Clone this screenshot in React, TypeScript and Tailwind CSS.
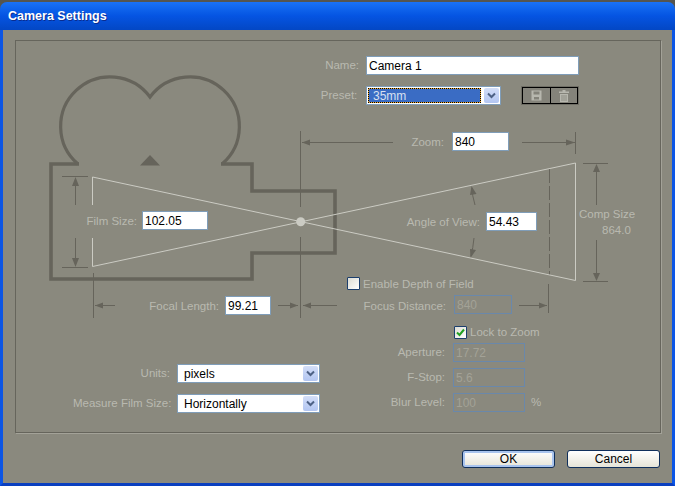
import type { ReactNode } from "react"

const font = { fontFamily: '"Liberation Sans", Arial, sans-serif' }

function Chevron() {
    return (
        <span className="flex h-[15px] w-[15px] shrink-0 items-center justify-center rounded-[2px] bg-gradient-to-b from-[#d3def8] to-[#b3c6f2]">
            <svg width="9" height="7" viewBox="0 0 9 7">
                <path d="M1 1.5 L4.5 5 L8 1.5" fill="none" stroke="#4d6185" strokeWidth="2" />
            </svg>
        </span>
    )
}

function Select({ value }: { value: string }) {
    return (
        <div className="flex h-[19px] w-[143px] items-center justify-between border border-[#7f9db9] bg-white pl-[6px] pr-[1px] text-[12px] leading-none text-black">
            <span>{value}</span>
            <Chevron />
        </div>
    )
}

function Label({ children, className = "" }: { children: ReactNode; className?: string }) {
    return <div className={"absolute whitespace-nowrap text-[11.5px] leading-[14px] text-[#b9b9b0] " + className}>{children}</div>
}

function ValueBox({ value, className }: { value: string; className: string }) {
    return (
        <div className={"absolute flex items-center border border-[#7f9db9] bg-white pl-[2px] text-[12px] leading-none text-black " + className}>
            {value}
        </div>
    )
}

function DisabledBox({ value, className = "" }: { value: string; className?: string }) {
    return (
        <div className={"flex h-[19px] items-center border border-[#6a88ab] pl-[2px] text-[12px] leading-none text-[#a3a297] " + className}>
            {value}
        </div>
    )
}

function CameraDiagram() {
    const dark = "#66645b"
    const light = "#cbcbc3"
    return (
        <svg className="absolute left-0 top-0" width="644" height="391" viewBox="16 41 644 391">
            {/* camera body and reels */}
            <g fill="none" stroke={dark}>
                <path strokeWidth="3.6" d="M79 164 L51 164 L51 279 L252 279 L252 253 L335 253 L335 191 L252 191 L252 164 L221 164" />
                <path strokeWidth="3.2" d="M78 164 A49.5 49.5 0 1 1 150 97 A49.5 49.5 0 1 1 222 164" />
            </g>
            <path d="M150 155 L160 165.5 L140 165.5 Z" fill={dark} />

            {/* dimension lines */}
            <g fill="none" stroke={dark} strokeWidth="1">
                <path d="M62 176.5 H88 M62 267.5 H88 M75.5 180 V205 M75.5 238 V263" />
                <path d="M300.5 131 V207 M300.5 237 V318 M93.5 273 V318 M548.5 284 V313" />
                <path d="M95 305.5 H115 M278 305.5 H298 M303 305.5 H337 M519 305.5 H547" />
                <path d="M302 142.5 H393 M522 142.5 H575 M575.5 132 V154" />
                <path d="M583 163.5 H608 M583 281.5 H608 M596.5 167 V205 M596.5 240 V278" />
                <path d="M475 205 Q472 195 472 188 M474 238 Q473 248 471 256" />
                <path d="M549.5 169 V275" strokeDasharray="14 3" />
            </g>
            <g fill={dark}>
                <path d="M75.5 177 L79 186 L72 186 Z M75.5 267 L79 258 L72 258 Z" />
                <path d="M596.5 164 L600 172 L593 172 Z M596.5 281 L600 273 L593 273 Z" />
                <path d="M95 305.5 L103 302.5 L103 308.5 Z M298 305.5 L290 302.5 L290 308.5 Z M303 305.5 L311 302.5 L311 308.5 Z M547 305.5 L539 302.5 L539 308.5 Z" />
                <path d="M302 142.5 L310 139.5 L310 145.5 Z M575 142.5 L566 139.5 L566 145.5 Z" />
                <path d="M471.5 186 L476.5 194 L470 195 Z M470.5 258 L476 250 L470 249 Z" />
            </g>

            {/* field of view */}
            <path d="M92.5 205 V177 L575.5 280.5 V163 L92.5 266.5 V238" fill="none" stroke={light} strokeWidth="1" />
            <circle cx="300.7" cy="221.7" r="4.5" fill={light} />
        </svg>
    )
}

function IconGroup() {
    return (
        <div className="flex h-[19px] w-[58px] border border-[#6f6e65] bg-[#84837a]">
            <div className="flex flex-1 border border-black">
                <div className="flex flex-1 items-center justify-center border-r border-black">
                    <svg width="11" height="11" viewBox="0 0 11 11">
                        <path d="M0.5 0.5 H10.5 V10.5 H0.5 Z" fill="#b7b7ae" />
                        <path d="M2.5 1.5 H8.5 V4.5 H2.5 Z M3 7 H8 V9.5 H3 Z" fill="#84837a" />
                    </svg>
                </div>
                <div className="flex flex-1 items-center justify-center">
                    <svg width="10" height="12" viewBox="0 0 10 12">
                        <path d="M0 1.5 H10 V3 H0 Z M3.5 0 H6.5 V1.5 H3.5 Z" fill="#b7b7ae" />
                        <path d="M1 4 H9 V12 H1 Z" fill="#b7b7ae" />
                        <path d="M3 5 V11 M5 5 V11 M7 5 V11" stroke="#84837a" strokeWidth="0.8" />
                    </svg>
                </div>
            </div>
        </div>
    )
}

function XpButton({ label, focused }: { label: string; focused?: boolean }) {
    return (
        <div className={"flex h-[18px] w-[93px] items-center justify-center rounded-[3px] border border-[#0f2f5c] bg-gradient-to-b from-white to-[#e6e4d8] text-[12px] leading-none text-black " + (focused ? "shadow-[inset_0_0_0_2px_#a9c4ee]" : "")}>
            {label}
        </div>
    )
}

export default function App() {
    return (
        <div className="h-[486px] w-[675px] overflow-hidden bg-[#55554f] pt-[2px]" style={font}>
            <div className="flex h-[484px] flex-col overflow-hidden rounded-t-[7px]">
                {/* Title bar */}
                <div className="flex h-[28px] shrink-0 items-center bg-gradient-to-b from-[#1a72f5] via-[#0554e2] to-[#0347c4] pl-[8px] pt-[1px] text-[12.5px] font-bold text-white [text-shadow:1px_1px_#0a2c8f]">
                    Camera Settings
                </div>

                <div className="flex flex-1 flex-col border-x-[3px] border-b-[3px] border-x-[#0b55e6] border-b-[#0a3fc0] bg-[#8a897e]">
                    {/* Main panel */}
                    <div className="relative ml-[12px] mt-[10px] flex h-[393px] w-[646px] flex-col justify-between border border-[#66655c] shadow-[1px_1px_0_#a3a298]">
                        <CameraDiagram />

                        {/* Name and preset */}
                        <div className="relative ml-auto mr-[81px] mt-[15px] flex w-[213px] flex-col gap-[11px]">
                            <div className="flex h-[19px] items-center border border-[#7f9db9] bg-white pl-[2px] text-[12px] leading-none text-black">
                                Camera 1
                                <span className="absolute right-[220px] text-[11.5px] text-[#b9b9b0]">Name:</span>
                            </div>
                            <div className="flex items-center gap-[20px]">
                                <div className="relative flex h-[19px] w-[136px] items-center gap-[3px] border border-[#7f9db9] bg-white pl-[1px] pr-[1px]">
                                    <span className="absolute right-[143px] text-[11.5px] text-[#b9b9b0]">Preset:</span>
                                    <div className="flex h-[15px] flex-1 items-center border border-[#f5a623] bg-[#3a6cc4] pl-[4px] text-[12px] leading-none text-[#d8e0f0] outline-1 -outline-offset-1 outline-dotted outline-black">
                                        35mm
                                    </div>
                                    <Chevron />
                                </div>
                                <IconGroup />
                            </div>
                        </div>

                        {/* Fields placed on the diagram */}
                        <Label className="right-[216px] top-[94px]">Zoom:</Label>
                        <ValueBox value="840" className="left-[436px] top-[91px] h-[19px] w-[57px]" />
                        <Label className="right-[523px] top-[173px]">Film Size:</Label>
                        <ValueBox value="102.05" className="left-[126px] top-[170px] h-[19px] w-[66px]" />
                        <Label className="right-[441px] top-[258px]">Focal Length:</Label>
                        <ValueBox value="99.21" className="left-[209px] top-[255px] h-[19px] w-[46px]" />
                        <Label className="right-[180px] top-[174px]">Angle of View:</Label>
                        <ValueBox value="54.43" className="left-[470px] top-[171px] h-[19px] w-[51px]" />
                        <Label className="left-[563px] top-[166px]">Comp Size</Label>
                        <Label className="left-[586px] top-[182px] text-[10px]">864.0</Label>

                        <div className="absolute left-[331px] top-[236px] h-[13px] w-[13px] rounded-[1px] border border-[#1c3f6e] bg-gradient-to-br from-[#dcdcd4] to-white" />
                        <Label className="left-[347px] top-[236px]">Enable Depth of Field</Label>
                        <Label className="right-[214px] top-[258px]">Focus Distance:</Label>
                        <DisabledBox value="840" className="absolute left-[438px] top-[254px] w-[58px]" />

                        {/* Lower controls */}
                        <div className="relative flex items-end justify-between pb-[19px]">
                            <div className="ml-[57px] grid grid-cols-[97px_143px] items-center gap-x-[7px] gap-y-[11px] text-[11.5px] text-[#b9b9b0]">
                                <div className="text-right">Units:</div>
                                <Select value="pixels" />
                                <div className="whitespace-nowrap text-right">Measure Film Size:</div>
                                <Select value="Horizontally" />
                            </div>
                            <div className="mb-[1px] mr-[114px] grid grid-cols-[80px_72px_13px] items-center gap-x-[8px] gap-y-[6px] text-[11.5px] text-[#b9b9b0]">
                                <div className="col-span-3 mb-[-4px] ml-[89px] flex items-center gap-[3px]">
                                    <div className="flex h-[13px] w-[13px] items-center justify-center rounded-[1px] border border-[#1c3f6e] bg-gradient-to-br from-[#dcdcd4] to-white">
                                        <svg width="9" height="9" viewBox="0 0 9 9">
                                            <path d="M1 4.5 L3.5 7 L8 1.5" fill="none" stroke="#21a121" strokeWidth="2" />
                                        </svg>
                                    </div>
                                    <span className="whitespace-nowrap">Lock to Zoom</span>
                                </div>
                                <div className="text-right">Aperture:</div>
                                <DisabledBox value="17.72" />
                                <div />
                                <div className="text-right">F-Stop:</div>
                                <DisabledBox value="5.6" />
                                <div />
                                <div className="text-right">Blur Level:</div>
                                <DisabledBox value="100" />
                                <div className="-ml-[2px]">%</div>
                            </div>
                        </div>
                    </div>

                    {/* Dialog buttons */}
                    <div className="mr-[12px] mt-[17px] flex justify-end gap-[12px]">
                        <XpButton label="OK" focused />
                        <XpButton label="Cancel" />
                    </div>
                </div>
            </div>
        </div>
    )
}
